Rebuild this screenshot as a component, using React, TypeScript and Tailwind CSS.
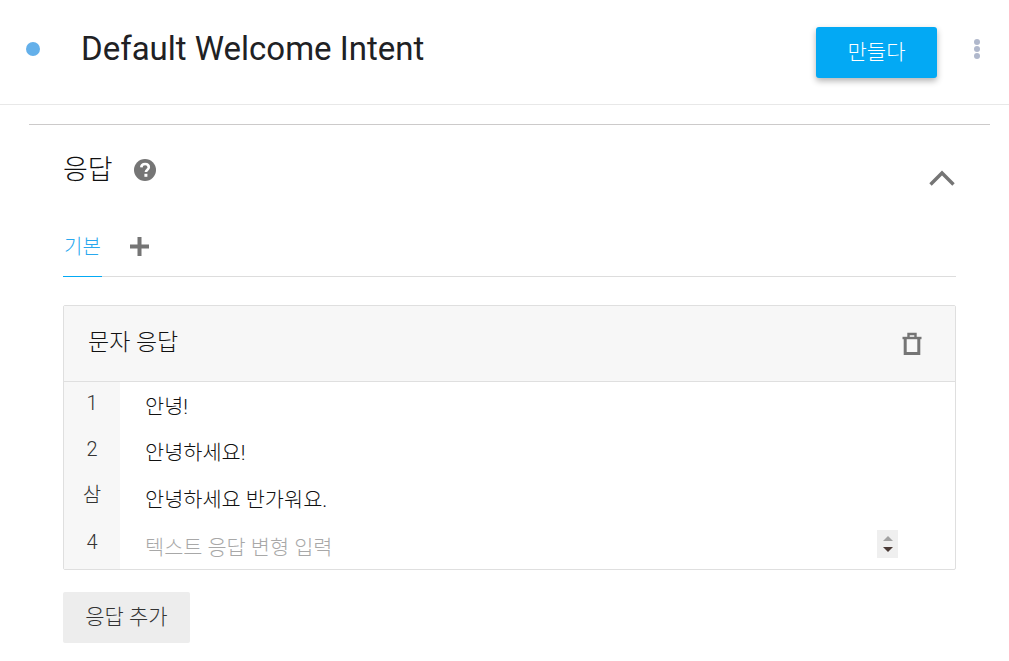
const font = "font-['Roboto','Noto_Sans_CJK_KR',sans-serif]";

const rows = [
  { num: "1", text: "안녕!", height: "h-[46px]" },
  { num: "2", text: "안녕하세요!", height: "h-[47px]" },
  { num: "삼", text: "안녕하세요 반가워요.", height: "h-[47px]" },
];

function Header() {
  return (
    <header className="flex h-[105px] items-center border-b border-[#e8e8e8] pb-[6px]">
      <span className="ml-[26px] h-[14px] w-[14px] rounded-full bg-[#64b0ea]" />
      <h1 className="ml-[41px] flex-1 -translate-y-[0.5px] text-[33px] leading-[40px] text-[#202124]">Default Welcome Intent</h1>
      <button className="mt-[7px] h-[51px] w-[121px] rounded-[3px] bg-[#03a9f4] text-[21px] font-light text-white shadow-[0_3px_6px_rgba(0,0,0,0.3)]">
        만들다
      </button>
      <div className="ml-[37px] mr-[29px] flex flex-col gap-[1px] pb-[1px]">
        <span className="h-[6px] w-[6px] rounded-full bg-[#b0b8cc]" />
        <span className="h-[6px] w-[6px] rounded-full bg-[#b0b8cc]" />
        <span className="h-[6px] w-[6px] rounded-full bg-[#b0b8cc]" />
      </div>
    </header>
  );
}

function TrashIcon() {
  return (
    <svg width="20" height="24" viewBox="0 0 20 24" fill="none" stroke="#757575" strokeWidth="3">
      <path d="M0.5 6H19.5" strokeWidth="2.4" />
      <path d="M6.5 5V2H13.5V5" strokeWidth="2.4" />
      <path d="M3.2 6V21.5H16.8V6" />
    </svg>
  );
}

function Stepper() {
  return (
    <div className="flex h-[28px] w-[21px] -translate-y-[2px] flex-col items-center justify-center gap-[6px] bg-[#efefef]">
      <svg width="10" height="5" viewBox="0 0 10 5"><path d="M5 0L10 5H0Z" fill="#a3a3a3" /></svg>
      <svg width="10" height="5" viewBox="0 0 10 5"><path d="M0 0H10L5 5Z" fill="#4a3a36" /></svg>
    </div>
  );
}

function ResponseCard() {
  return (
    <div className="mt-[28px] rounded-[2px] border border-[#dfdfdf]">
      <div className="flex h-[76px] items-center justify-between border-b border-[#dfdfdf] bg-[#f7f7f7] pl-[24px] pr-[33px]">
        <span className="text-[23px] font-light text-[#111]">문자 응답</span>
        <TrashIcon />
      </div>
      <div className="flex">
        <div className="flex w-[56px] flex-col items-center bg-[#f7f7f7] text-[20px] font-light leading-[46px] text-[#333]">
          <span className="h-[46px] -translate-y-[2px]">1</span>
          <span className="h-[46px] -translate-y-[2px]">2</span>
          <span className="h-[46px] -translate-y-[2px]">삼</span>
          <span className="h-[49px] -translate-y-[1px]">4</span>
        </div>
        <div className="flex-1 pl-[25px] pr-[57px] text-[20.8px] font-light leading-[46px] text-[#111]">
          {rows.map((row) => (
            <div key={row.num} className={`${row.height} translate-y-[2px]`}>{row.text}</div>
          ))}
          <div className="flex h-[47px] items-center justify-between">
            <span className="translate-y-[2px] text-[#a8a8a8]">텍스트 응답 변형 입력</span>
            <Stepper />
          </div>
        </div>
      </div>
    </div>
  );
}

export default function App() {
  return (
    <div className={`${font} h-[661px] w-[1009px] overflow-hidden bg-white`}>
      <Header />
      <main className="ml-[29px] mr-[19px] mt-[19px] border-t border-[#cccaca] pl-[34px] pr-[34px]">
        <div className="flex items-start justify-between">
          <div className="mt-[27px] flex items-center">
            <h2 className="text-[27px] font-light leading-[36px] text-[#111]">응답</h2>
            <svg className="ml-[20px]" width="24" height="24" viewBox="0 0 24 24">
              <circle cx="12" cy="12" r="11" fill="#757575" />
              <path d="M8.3 9.4C8.4 7.3 10 6 12.1 6C14.2 6 15.8 7.3 15.8 9.2C15.8 11.6 12.9 11.7 12.9 14" fill="none" stroke="#fff" strokeWidth="2.6" />
              <rect x="11.4" y="15.8" width="3" height="3" fill="#fff" />
            </svg>
          </div>
          <svg className="mr-[1px] mt-[45px]" width="26" height="16" viewBox="0 0 26 16" fill="none" stroke="#757575" strokeWidth="3.4">
            <path d="M1.5 14.5L13 3L24.5 14.5" />
          </svg>
        </div>
        <div className="mt-[29px] flex h-[60px] items-center border-b border-[#dddddd]">
          <div className="relative flex h-[59px] w-[39px] items-center justify-center pt-[1px] text-[20px] font-light text-[#29a8ee]">
            기본
            <span className="absolute inset-x-0 -bottom-[1px] h-[1px] bg-[#03a9f4]" />
          </div>
          <svg className="ml-[28px]" width="19" height="19" viewBox="0 0 19 19" fill="#757575">
            <path d="M7.5 0H11.5V7.5H19V11.5H11.5V19H7.5V11.5H0V7.5H7.5Z" />
          </svg>
        </div>
        <ResponseCard />
        <button className="mt-[22px] h-[51px] w-[127px] rounded-[2px] bg-[#ededed] text-[21px] font-light text-[#333]">
          응답 추가
        </button>
      </main>
    </div>
  );
}
